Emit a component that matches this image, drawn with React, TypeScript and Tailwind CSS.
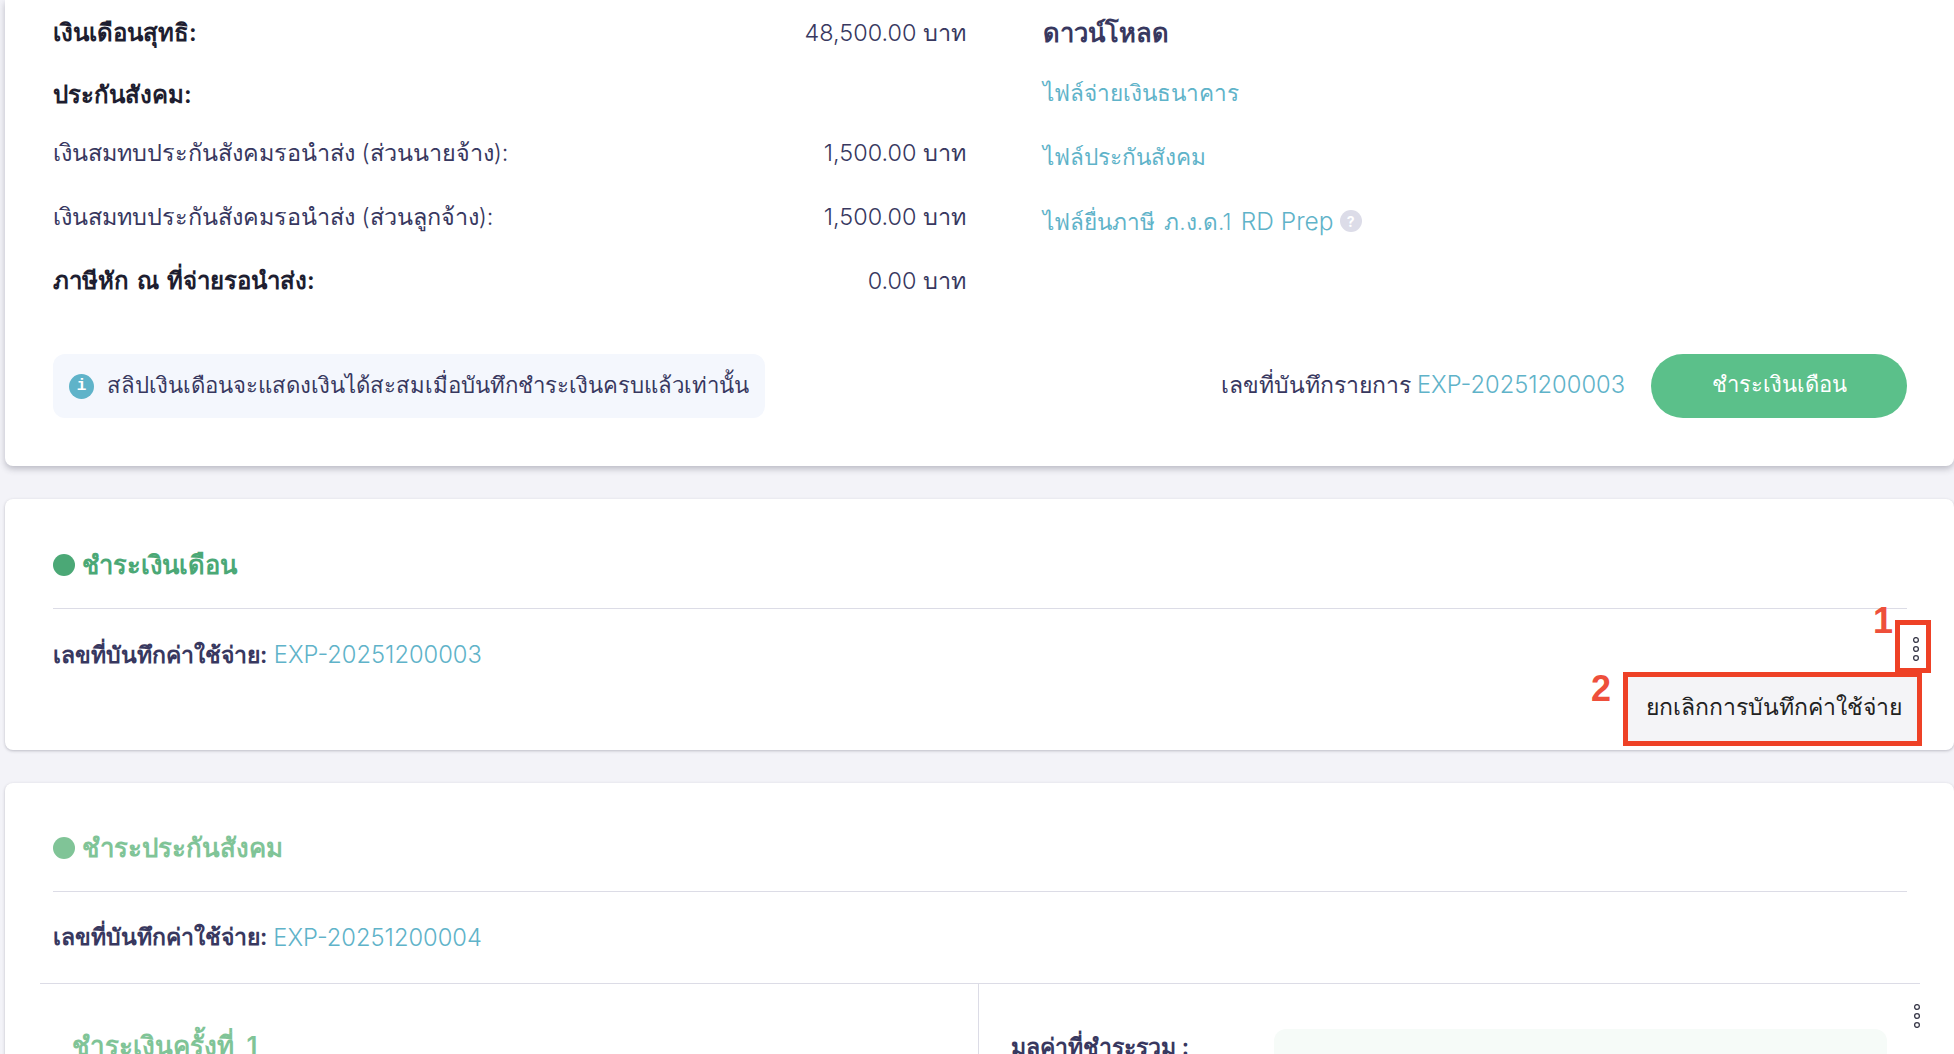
function Dots({ className }: { className: string }) {
  return (
    <svg className={className} width="8" height="24" viewBox="0 0 8 24" fill="none" stroke="#3a3a4a" strokeWidth="1.3">
      <circle cx="4" cy="3" r="2.4" />
      <circle cx="4" cy="12" r="2.4" />
      <circle cx="4" cy="21" r="2.4" />
    </svg>
  );
}

function Row({ label, value, bold, className = "" }: { label: string; value?: string; bold?: boolean; className?: string }) {
  return (
    <div className={"flex h-[64px] items-center justify-between " + className}>
      <span className={bold ? "text-[24px] font-semibold text-[#1e1e30] [word-spacing:2px]" : "text-[23.4px] font-light text-[#38385f]"}>{label}</span>
      {value && <span className="text-[23.4px] font-light text-[#38385f]">{value}</span>}
    </div>
  );
}

export default function App() {
  return (
    <div className="h-[1054px] w-[1954px] overflow-hidden bg-[#f3f3f8] pl-[5px] font-['Inter',sans-serif]">
      {/* Top card */}
      <section className="h-[466px] rounded-b-lg bg-white pl-[48px] pr-[47px] pt-[1px] shadow-[0_3px_6px_rgba(60,60,80,0.3)]">
        <div className="flex">
          <div className="w-[913px]">
            <Row label="เงินเดือนสุทธิ:" value="48,500.00 บาท" bold />
            <Row label="ประกันสังคม:" bold className="mt-[-2px]" />
            <Row label="เงินสมทบประกันสังคมรอนำส่ง (ส่วนนายจ้าง):" value="1,500.00 บาท" className="mt-[-6px]" />
            <Row label="เงินสมทบประกันสังคมรอนำส่ง (ส่วนลูกจ้าง):" value="1,500.00 บาท" />
            <Row label="ภาษีหัก ณ ที่จ่ายรอนำส่ง:" value="0.00 บาท" bold />
          </div>
          <div className="ml-[77px] flex flex-col">
            <div className="flex h-[64px] items-center text-[25.5px] font-semibold text-[#38385f]">ดาวน์โหลด</div>
            <div className="mt-[-4px] flex h-[64px] items-center text-[22.6px] font-light text-[#5fb3c9]">ไฟล์จ่ายเงินธนาคาร</div>
            <div className="flex h-[64px] items-center text-[22.6px] font-light text-[#5fb3c9]">ไฟล์ประกันสังคม</div>
            <div className="flex h-[64px] items-center gap-[6px] text-[22.6px] font-light text-[#5fb3c9]">
              <span className="[word-spacing:3px]">
                ไฟล์ยื่นภาษี ภ.ง.ด.1 <span className="text-[24.5px] [word-spacing:0px]">RD Prep</span>
              </span>
              <span className="flex h-[22px] w-[22px] items-center justify-center rounded-full bg-[#dcdce8] text-[14px] font-bold text-white">?</span>
            </div>
          </div>
        </div>
        <div className="mt-[41px] flex items-center justify-between">
          <div className="flex h-[64px] w-[712px] items-center gap-[13px] whitespace-nowrap rounded-[12px] bg-[#f4f7fd] pl-[16px]">
            <span className="flex h-[25px] w-[25px] items-center justify-center rounded-full bg-[#5fb3c9] font-['Liberation_Mono',monospace] text-[16px] font-bold text-white">i</span>
            <span className="pb-[3px] text-[22.2px] font-light text-[#38385f]">สลิปเงินเดือนจะแสดงเงินได้สะสมเมื่อบันทึกชำระเงินครบแล้วเท่านั้น</span>
          </div>
          <div className="flex items-center gap-[26px]">
            <span className="pb-[2px] text-[23px] font-light text-[#38385f]">
              เลขที่บันทึกรายการ <span className="text-[23.7px] text-[#5fb3c9]">EXP-20251200003</span>
            </span>
            <button className="h-[64px] w-[256px] rounded-full bg-[#5bc08a] pb-[4px] text-[22px] text-white">ชำระเงินเดือน</button>
          </div>
        </div>
      </section>

      {/* Salary payment card */}
      <section className="relative mt-[33px] h-[251px] rounded-lg bg-white pl-[48px] pr-[47px] shadow-[0_1px_3px_rgba(60,60,80,0.3)]">
        <div className="flex h-[110px] items-center gap-[7px] border-b border-[#dcdce6] pt-[22px]">
          <span className="h-[22px] w-[22px] rounded-full bg-[#4ba876]" />
          <span className="pt-[1px] text-[25.5px] font-semibold text-[#4ba876]">ชำระเงินเดือน</span>
        </div>
        <div className="mt-[28px] text-[23px] font-light text-[#38385f]">
          <span className="font-semibold">เลขที่บันทึกค่าใช้จ่าย:</span>{" "}
          <span className="text-[23.7px] text-[#5fb3c9]">EXP-20251200003</span>
        </div>
        <span className="absolute left-[1868px] top-[102px] font-['Liberation_Sans',sans-serif] text-[36px] font-bold leading-[40px] text-[#ee4f3b]">1</span>
        <span className="absolute left-[1586px] top-[170px] font-['Liberation_Sans',sans-serif] text-[36px] font-bold leading-[40px] text-[#ee4f3b]">2</span>
        <div className="absolute left-[1890px] top-[121px] flex h-[53px] w-[36px] items-center justify-center border-[5px] border-[#ee4126] pl-[5px] pt-[5px]">
          <Dots className="" />
        </div>
        <div className="absolute left-[1618px] top-[173px] flex h-[74px] w-[299px] items-center justify-center border-[5px] border-[#ee4126] bg-[#f4f4f7] pb-[4px] pl-[2px] text-[23px] font-light text-[#222]">
          ยกเลิกการบันทึกค่าใช้จ่าย
        </div>
      </section>

      {/* Social security card */}
      <section className="relative mt-[33px] h-[300px] rounded-lg bg-white shadow-[0_1px_3px_rgba(60,60,80,0.3)]">
        <div className="pl-[48px] pr-[47px]">
          <div className="flex h-[109px] items-center gap-[7px] border-b border-[#dcdce6] pt-[21px]">
            <span className="h-[22px] w-[22px] rounded-full bg-[#80c497]" />
            <span className="pt-[1px] text-[25.8px] font-semibold text-[#80c497]">ชำระประกันสังคม</span>
          </div>
          <div className="flex h-[91px] items-center text-[23px] font-light text-[#38385f]">
            <span className="font-semibold">เลขที่บันทึกค่าใช้จ่าย:</span>
            <span className="ml-[6px] text-[23.7px] text-[#5fb3c9]">EXP-20251200004</span>
          </div>
        </div>
        <div className="relative ml-[35px] mr-[34px] flex border-t border-[#dcdce6]">
          <div className="w-[939px] border-r border-[#dcdce6] pl-[32px] pt-[42px] text-[26px] font-semibold text-[#80c497] [word-spacing:6px]">ชำระเงินครั้งที่ 1</div>
          <div className="flex flex-1 items-start pl-[32px] pt-[46px]">
            <span className="w-[263px] text-[23px] font-semibold text-[#38385f]">มูลค่าที่ชำระรวม :</span>
            <div className="-mt-[1px] h-[80px] w-[613px] rounded-[12px] bg-[#f6fbf8]" />
          </div>
          <Dots className="absolute right-[-1px] top-[20px]" />
        </div>
      </section>
    </div>
  );
}
